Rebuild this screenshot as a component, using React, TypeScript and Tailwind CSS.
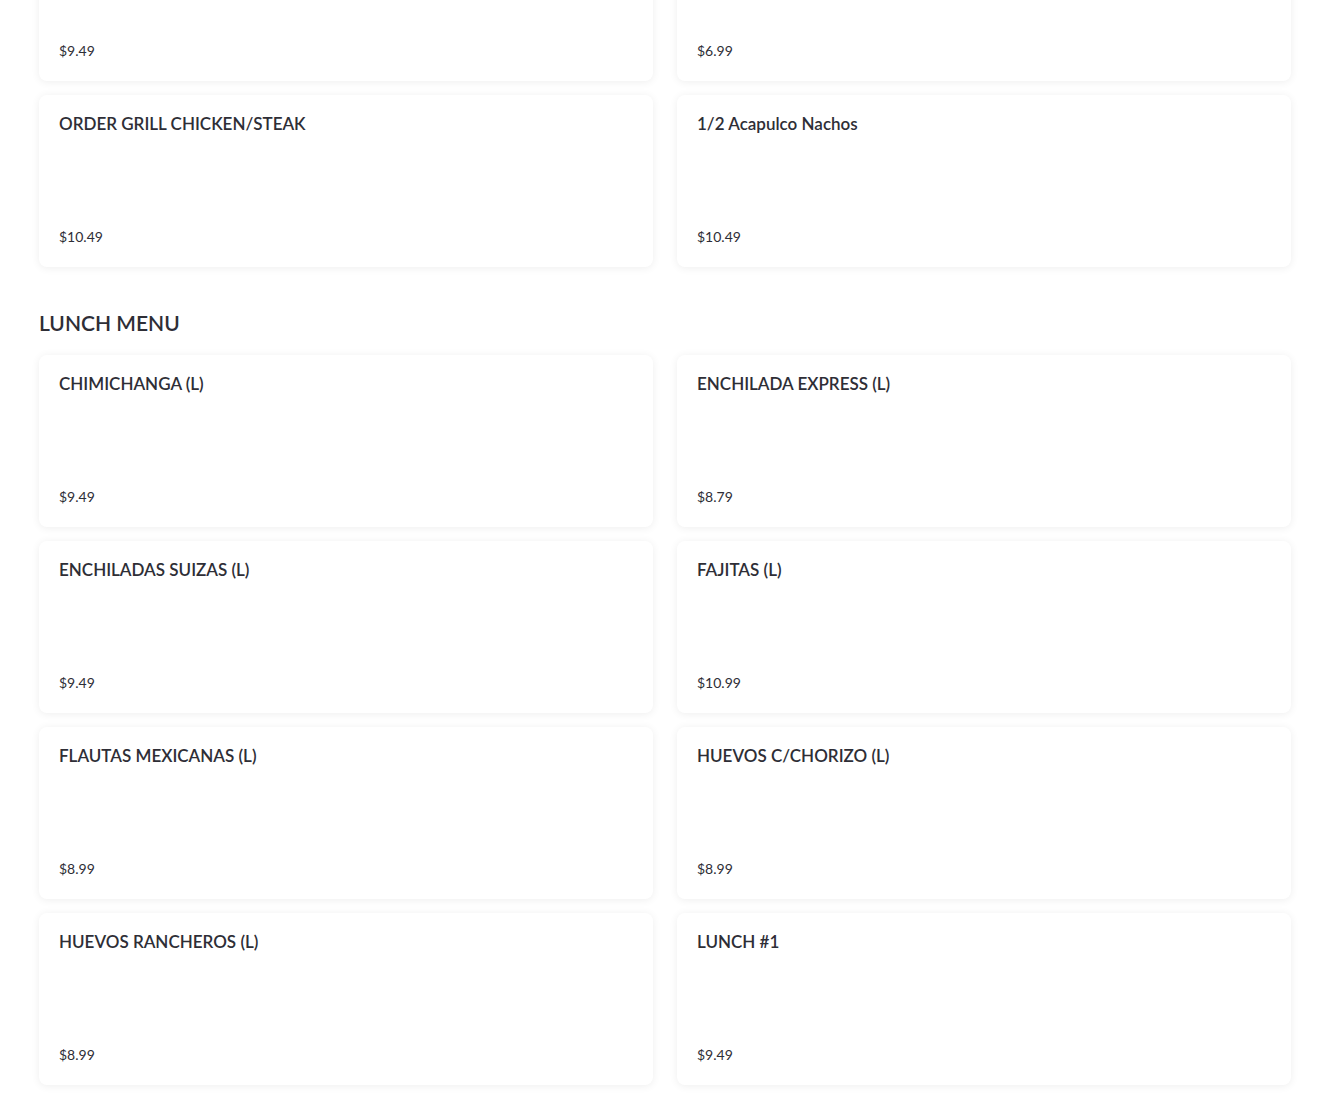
import React from "react";

type Item = { name: string; price: string };

const prevItems: Item[] = [
  { name: "", price: "$9.49" },
  { name: "", price: "$6.99" },
  { name: "ORDER GRILL CHICKEN/STEAK", price: "$10.49" },
  { name: "1/2 Acapulco Nachos", price: "$10.49" },
];

const lunchItems: Item[] = [
  { name: "CHIMICHANGA (L)", price: "$9.49" },
  { name: "ENCHILADA EXPRESS (L)", price: "$8.79" },
  { name: "ENCHILADAS SUIZAS (L)", price: "$9.49" },
  { name: "FAJITAS (L)", price: "$10.99" },
  { name: "FLAUTAS MEXICANAS (L)", price: "$8.99" },
  { name: "HUEVOS C/CHORIZO (L)", price: "$8.99" },
  { name: "HUEVOS RANCHEROS (L)", price: "$8.99" },
  { name: "LUNCH #1", price: "$9.49" },
];

function MenuCard({ item }: { item: Item }) {
  return (
    <div className="h-[172px] bg-white rounded-lg shadow-[0_1px_8px_rgba(0,0,0,0.07)] px-5 pt-[17px] pb-5 flex flex-col justify-between">
      <h3 className="text-[17px] leading-6 font-semibold text-[#2e2e36]">
        {item.name}
      </h3>
      <span className="text-[14px] leading-5 text-[#2e2e36]">{item.price}</span>
    </div>
  );
}

export default function App() {
  return (
    <div
      className="min-h-screen bg-white px-[39px] pb-10 overflow-hidden"
      style={{ fontFamily: "Lato, 'Noto Sans', sans-serif" }}
    >
      <section className="-mt-[91px] grid grid-cols-2 gap-x-6 gap-y-[14px]">
        {prevItems.map((it, i) => (
          <MenuCard key={i} item={it} />
        ))}
      </section>

      <section className="mt-[42px]">
        <h2 className="text-[21px] leading-7 font-semibold text-[#2e2e36] mb-[18px]">
          LUNCH MENU
        </h2>
        <div className="grid grid-cols-2 gap-x-6 gap-y-[14px]">
          {lunchItems.map((it, i) => (
            <MenuCard key={i} item={it} />
          ))}
        </div>
      </section>
    </div>
  );
}
